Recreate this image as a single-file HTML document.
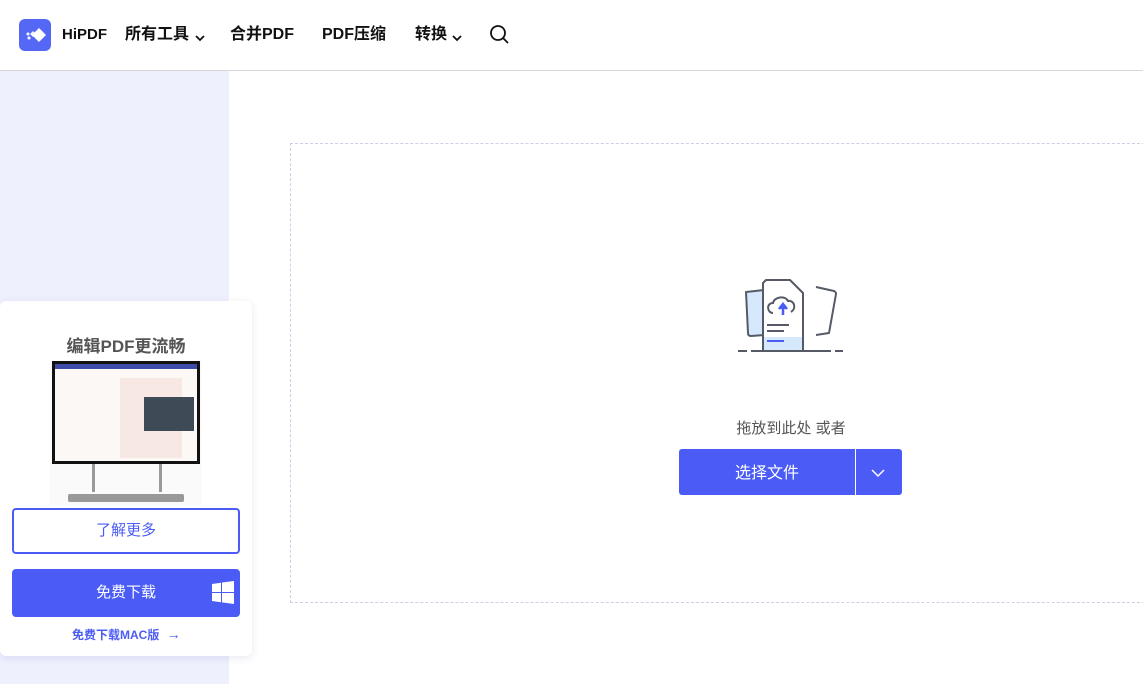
<!DOCTYPE html>
<html><head><meta charset="utf-8"><style>
*{margin:0;padding:0;box-sizing:border-box}
body{width:1143px;height:684px;overflow:hidden;background:#fff;font-family:"Liberation Sans","Noto Sans CJK SC",sans-serif;position:relative}
.hdr{position:absolute;left:0;top:0;width:1143px;height:71px;border-bottom:1px solid #d8d8dc;background:#fff}
.nav{position:absolute;top:25px;font-size:16px;font-weight:bold;color:#111;line-height:20px}
.side{position:absolute;left:0;top:71px;width:229px;height:613px;background:#eef0fe}
.card{position:absolute;left:0;top:301px;width:252px;height:355px;background:#fff;border-radius:6px;box-shadow:0 2px 8px rgba(60,70,140,.12)}
.drop{position:absolute;left:290px;top:143px;width:860px;height:460px;border:1px dashed #ccd0e4}
.chev{position:absolute;top:34px}
</style></head><body>
<div class="hdr">
 <div style="position:absolute;left:19px;top:19px;width:32px;height:32px;border-radius:6px;background:#5468f5">
  <svg width="32" height="32" viewBox="0 0 32 32"><path d="M20 9l7 7-7 7-7-7z" fill="#fff"/><path d="M14 12l3 3-3 3-3-3zM9 13l2 2-2 2-2-2zM10 17l2 2-2 2-2-2z" fill="#fff" opacity=".9"/></svg>
 </div>
 <div class="nav" style="left:62px;font-size:15px">HiPDF</div>
 <div class="nav" style="left:125px">所有工具</div>
 <svg class="chev" style="left:195px" width="10" height="8" viewBox="0 0 10 8"><path d="M1 2l4 4 4-4" fill="none" stroke="#111" stroke-width="1.8"/></svg>
 <div class="nav" style="left:230px">合并PDF</div>
 <div class="nav" style="left:322px">PDF压缩</div>
 <div class="nav" style="left:415px">转换</div>
 <svg class="chev" style="left:452px" width="10" height="8" viewBox="0 0 10 8"><path d="M1 2l4 4 4-4" fill="none" stroke="#111" stroke-width="1.8"/></svg>
 <svg style="position:absolute;left:489px;top:24px" width="22" height="22" viewBox="0 0 22 22"><circle cx="9" cy="9" r="7" fill="none" stroke="#111" stroke-width="1.8"/><path d="M14 14l5 5" stroke="#111" stroke-width="1.8"/></svg>
</div>
<div class="side"></div>
<div class="card">
 <div style="position:absolute;top:31px;width:252px;text-align:center;font-size:17px;font-weight:bold;color:#555">编辑PDF更流畅</div>
 <div style="position:absolute;left:50px;top:60px;width:152px;height:144px;background:#fafafa">
  <div style="position:absolute;left:2px;top:0;width:148px;height:103px;background:#111;padding:3px">
   <div style="width:100%;height:100%;background:#fbf8f5;position:relative">
    <div style="position:absolute;left:0;top:0;right:0;height:5px;background:#3c4aa8"></div>
    <div style="position:absolute;left:65px;top:14px;width:62px;height:80px;background:#f8e8e4"></div>
    <div style="position:absolute;left:89px;top:33px;width:50px;height:34px;background:#3e4a55"></div>
   </div>
  </div>
  <div style="position:absolute;left:42px;top:103px;width:70px;height:28px;border-left:3px solid #999;border-right:3px solid #999"></div>
  <div style="position:absolute;left:18px;top:133px;width:116px;height:8px;background:#999;border-radius:2px"></div>
 </div>
 <div style="position:absolute;left:12px;top:207px;width:228px;height:46px;border:2px solid #4a5cf5;border-radius:4px;text-align:center;line-height:42px;color:#4a5cf5;font-size:15px">了解更多</div>
 <div style="position:absolute;left:12px;top:268px;width:228px;height:48px;background:#4a5cf5;border-radius:4px;text-align:center;line-height:48px;color:#fff;font-size:15px">免费下载
  <svg style="position:absolute;left:200px;top:12px" width="22" height="23" viewBox="0 0 22 23"><path d="M0 3l9-1.3v9.3H0zM10 1.5L22 0v11H10zM0 12h9v9.3L0 20zM10 12h12v11l-12-1.6z" fill="#fff"/></svg></div>
 <div style="position:absolute;top:325px;left:72px;font-size:12px;font-weight:bold;color:#4a5cf5">免费下载MAC版 <span style="font-weight:normal;font-size:14px;margin-left:4px">→</span></div>
</div>
<div class="drop"></div>
<svg style="position:absolute;left:736px;top:277px" width="110" height="78" viewBox="0 0 110 78">
 <path d="M10 15l18-2 0 45-13 1c-2 0-3-1-3-3z" fill="#d6e8fb" stroke="#555a66" stroke-width="2" stroke-linejoin="round"/>
 <path d="M80 10l18 4c2 1 2 2 2 3l-7 39-13 2" fill="none" stroke="#555a66" stroke-width="2" stroke-linejoin="round"/>
 <path d="M30 3h24l13 13v58H27V6z" fill="#fff" stroke="#555a66" stroke-width="2" stroke-linejoin="round"/>
 <path d="M28 60h38v13H28z" fill="#d6e8fb"/>
 <path d="M37 36c-6 0-7-10 0-10 1-6 12-8 15-2 6-1 9 7 3 11" fill="none" stroke="#555a66" stroke-width="2"/>
 <path d="M47 38v-9M43 32l4-5 4 5" stroke="#4a5cf5" stroke-width="2.5" fill="#4a5cf5"/>
 <path d="M31 48h22M31 54h17" stroke="#555a66" stroke-width="2"/><path d="M31 64h17" stroke="#4a5cf5" stroke-width="2"/>
 <path d="M2 74h9M15 74h80M99 74h8" stroke="#555a66" stroke-width="2"/>
</svg>
<div style="position:absolute;left:680px;top:417px;width:222px;text-align:center;font-size:15px;color:#555">拖放到此处 或者</div>
<div style="position:absolute;left:679px;top:449px;width:223px;height:46px;background:#4a5cf5;border-radius:3px">
 <div style="position:absolute;left:0;top:2px;width:176px;text-align:center;line-height:46px;color:#fff;font-size:16px">选择文件</div>
 <div style="position:absolute;left:176px;top:0;width:1px;height:46px;background:#fff"></div>
 <svg style="position:absolute;left:191px;top:19px" width="16" height="10" viewBox="0 0 16 10"><path d="M2 2l6 6 6-6" fill="none" stroke="#fff" stroke-width="1.5"/></svg>
</div>
</body></html>
